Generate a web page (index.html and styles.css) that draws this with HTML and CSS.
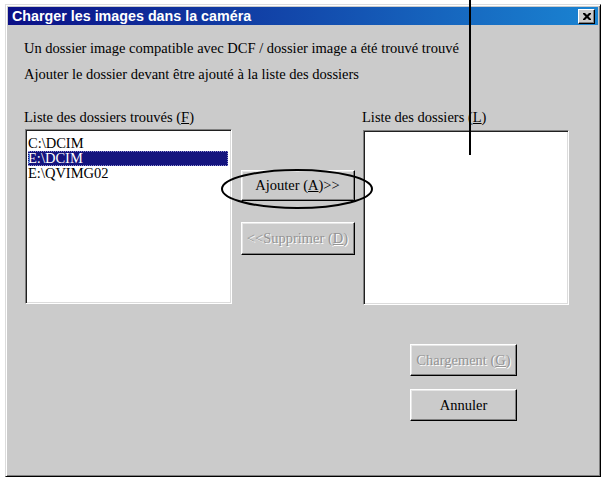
FILE: index.html
```html
<!DOCTYPE html>
<html lang="fr">
<head>
<meta charset="utf-8">
<title>Charger les images dans la caméra</title>
<link rel="stylesheet" href="styles.css">
</head>
<body>
<div class="dialog">
  <div class="titlebar">
    <span class="title">Charger les images dans la caméra</span>
    <span class="close"><svg width="8" height="7" viewBox="0 0 8 7"><path d="M0 0h2l2 2 2-2h2v1l-2.5 2.5L8 6v1H6L4 5 2 7H0V6l2.5-2.5L0 1z" fill="#000"/></svg></span>
  </div>
  <div class="content">
    <p class="msg">Un dossier image compatible avec DCF / dossier image a été trouvé trouvé</p>
    <p class="msg msg2">Ajouter le dossier devant être ajouté à la liste des dossiers</p>
    <div class="lists">
      <div class="label">Liste des dossiers trouvés (<u>F</u>)</div>
      <div></div>
      <div class="label">Liste des dossiers (<u>L</u>)</div>
      <div class="listbox">
        <div class="item">C:\DCIM</div>
        <div class="item selected">E:\DCIM</div>
        <div class="item">E:\QVIMG02</div>
      </div>
      <div class="midbuttons">
        <button class="btn add">Ajouter (<u>A</u>)&gt;&gt;</button>
        <button class="btn disabled del">&lt;&lt;Supprimer (<u>D</u>)</button>
      </div>
      <div class="listbox right"></div>
    </div>
    <div class="bottombuttons">
      <button class="btn disabled big">Chargement (<u>G</u>)</button>
      <button class="btn big">Annuler</button>
    </div>
  </div>
  <svg class="ellipse" width="154" height="42" viewBox="0 0 154 42"><ellipse cx="77" cy="21" rx="75" ry="19" fill="none" stroke="#000" stroke-width="2"/></svg>
</div>
<div class="pointer"></div>
</body>
</html>
```
FILE: styles.css
```css
html, body {
  margin: 0;
  padding: 0;
  background: #ffffff;
}
body {
  width: 606px;
  height: 481px;
  position: relative;
  overflow: hidden;
  font-family: "Liberation Serif", "Times New Roman", serif;
  font-size: 14.5px;
  color: #000;
}
.dialog {
  position: relative;
  margin: 4px 0 0 5px;
  width: 596px;
  height: 473px;
  box-sizing: border-box;
  background: #cbcbcb;
  border: 1px solid;
  border-color: #dcdcdc #000 #000 #dcdcdc;
  box-shadow: inset 1px 1px #ffffff, inset -1px -1px #808080;
  padding: 2px;
  display: flex;
  flex-direction: column;
}
.titlebar {
  height: 18px;
  background: linear-gradient(to right, #0b0f86, #1a84d2);
  display: flex;
  align-items: center;
  justify-content: space-between;
  padding: 0 3px 0 4px;
}
.title {
  font-family: "Liberation Sans", Arial, sans-serif;
  font-weight: bold;
  font-size: 14.3px;
  color: #fff;
}
.close {
  width: 17px;
  height: 15px;
  box-sizing: border-box;
  background: #cbcbcb;
  border: 1px solid;
  border-color: #fff #000 #000 #fff;
  box-shadow: inset -1px -1px #808080;
  display: flex;
  align-items: center;
  justify-content: center;
}
.content {
  padding: 16px 0 0 16px;
  display: flex;
  flex-direction: column;
}
.msg {
  margin: 0;
  line-height: 15px;
}
.msg2 {
  margin-top: 11px;
}
.lists {
  margin-top: 28px;
  margin-left: 1px;
  display: grid;
  grid-template-columns: 207px 114px 206px;
  column-gap: 8.5px;
  row-gap: 4px;
}
.label {
  line-height: 15px;
  margin-left: -1px;
}
.listbox {
  height: 175px;
  box-sizing: border-box;
  background: #fff;
  border: 1px solid;
  border-color: #808080 #ffffff #ffffff #808080;
  box-shadow: inset 1px 1px #202020, inset -1px -1px #dcdcdc;
  padding: 6px 3px 0 2px;
}
.listbox.right {
  margin-top: 1px;
}
.item {
  height: 15px;
  line-height: 15px;
}
.item.selected {
  background: #14147e;
  color: #fff;
  outline: 1px dotted #8f8fd0;
  outline-offset: -1px;
}
.midbuttons {
  display: flex;
  flex-direction: column;
  padding-top: 41px;
  gap: 21px;
}
.btn {
  font-family: "Liberation Serif", "Times New Roman", serif;
  font-size: 14.5px;
  color: #000;
  background: #cbcbcb;
  border: 1px solid;
  border-color: #ffffff #000 #000 #ffffff;
  box-shadow: inset -1px -1px #808080, inset 1px 1px #e6e6e6;
  padding: 0;
  margin: 0;
  height: 31px;
  width: 114px;
  box-sizing: border-box;
}
.btn.del {
  height: 33px;
}
.btn.disabled {
  color: #949494;
  text-shadow: 1px 1px #ffffff;
}
.bottombuttons {
  margin-top: 39px;
  margin-left: 386px;
  display: flex;
  flex-direction: column;
  gap: 13px;
}
.btn.big {
  width: 107px;
  height: 32px;
}
.ellipse {
  position: absolute;
  left: 214px;
  top: 163px;
}
.pointer {
  position: absolute;
  left: 469px;
  top: 0;
  width: 2px;
  height: 155px;
  background: #000;
}
```
